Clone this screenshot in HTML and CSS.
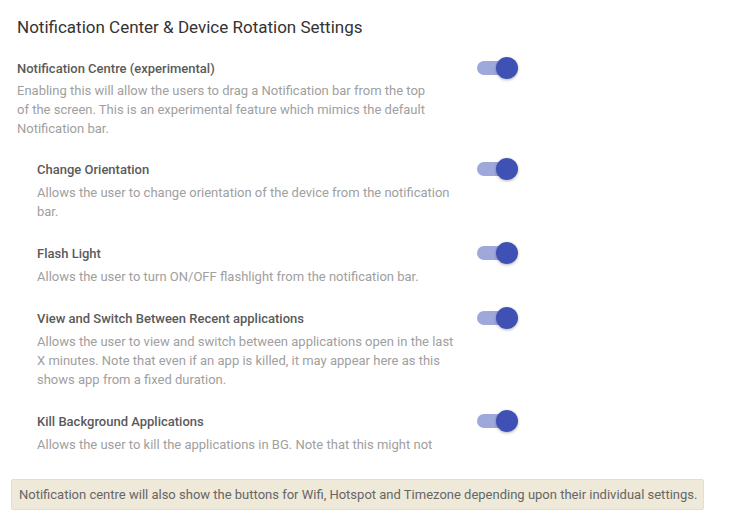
FILE: index.html
```html
<!DOCTYPE html>
<html>
<head>
<meta charset="UTF-8">
<meta name="viewport" content="width=device-width, initial-scale=1">
<link rel="stylesheet" href="styles.css">
</head>
<body>

<div class="settings">
  <h2 class="settings-title">Notification Center &amp; Device Rotation Settings</h2>

  <div class="setting main-setting">
    <div class="setting-text">
      <div class="setting-label">Notification Centre (experimental)</div>
      <div class="setting-desc">Enabling this will allow the users to drag a Notification bar from the top of the screen. This is an experimental feature which mimics the default Notification bar.</div>
    </div>
    <label class="switch"><input type="checkbox" checked><span class="slider"></span></label>
  </div>

  <div class="sub-settings">
    <div class="setting">
      <div class="setting-text">
        <div class="setting-label">Change Orientation</div>
        <div class="setting-desc">Allows the user to change orientation of the device from the notification bar.</div>
      </div>
      <label class="switch"><input type="checkbox" checked><span class="slider"></span></label>
    </div>

    <div class="setting">
      <div class="setting-text">
        <div class="setting-label">Flash Light</div>
        <div class="setting-desc">Allows the user to turn ON/OFF flashlight from the notification bar.</div>
      </div>
      <label class="switch"><input type="checkbox" checked><span class="slider"></span></label>
    </div>

    <div class="setting">
      <div class="setting-text">
        <div class="setting-label">View and Switch Between Recent applications</div>
        <div class="setting-desc">Allows the user to view and switch between applications open in the last X minutes. Note that even if an app is killed, it may appear here as this shows app from a fixed duration.</div>
      </div>
      <label class="switch"><input type="checkbox" checked><span class="slider"></span></label>
    </div>

    <div class="setting">
      <div class="setting-text">
        <div class="setting-label">Kill Background Applications</div>
        <div class="setting-desc">Allows the user to kill the applications in BG. Note that this might not</div>
      </div>
      <label class="switch"><input type="checkbox" checked><span class="slider"></span></label>
    </div>
  </div>

  <div class="note">Notification centre will also show the buttons for Wifi, Hotspot and Timezone depending upon their individual settings.</div>
</div>

</body>
</html>
```

FILE: styles.css
```css
body {
  margin: 0;
  background: #fff;
  font-family: Roboto, "Liberation Sans", sans-serif;
}

.settings {
  padding: 15px 0 0 17px;
}

.settings-title {
  margin: 0 0 20px 0;
  font-size: 17px;
  font-weight: 400;
  line-height: 24px;
  color: #333;
}

.setting {
  display: flex;
  align-items: flex-start;
  width: 502px;
  margin-bottom: 23px;
}

.main-setting {
  margin-bottom: 22px;
}

.sub-settings {
  padding-left: 20px;
}

.sub-settings .setting {
  width: 482px;
}

.setting-text {
  flex: 1;
}

.setting-label {
  font-size: 13px;
  font-weight: 500;
  line-height: 19px;
  color: #5a5a5a;
  margin-bottom: 3px;
}

.sub-settings .setting-label {
  margin-bottom: 4px;
}

.setting-desc {
  width: 420px;
  font-size: 13px;
  line-height: 19px;
  color: #a0a0a0;
}

.switch {
  position: relative;
  display: block;
  width: 42px;
  height: 22px;
  margin-top: -2px;
}

.switch input {display: none;}

.slider {
  position: absolute;
  left: 0;
  top: 4px;
  width: 36px;
  height: 14px;
  border-radius: 7px;
  background: #9fa8da;
}

.slider:after {
  content: "";
  position: absolute;
  left: 19px;
  top: -4px;
  width: 22px;
  height: 22px;
  border-radius: 50%;
  background: #3f51b5;
  box-shadow: 0 1px 3px rgba(0,0,0,0.3);
}

.note {
  display: inline-block;
  margin: 2px 0 0 -6px;
  padding: 6px 6px 6px 7px;
  font-size: 13px;
  line-height: 17px;
  color: #666;
  background: #efe9d9;
  border: 1px solid #e8dfbf;
  border-radius: 2px;
}
```
